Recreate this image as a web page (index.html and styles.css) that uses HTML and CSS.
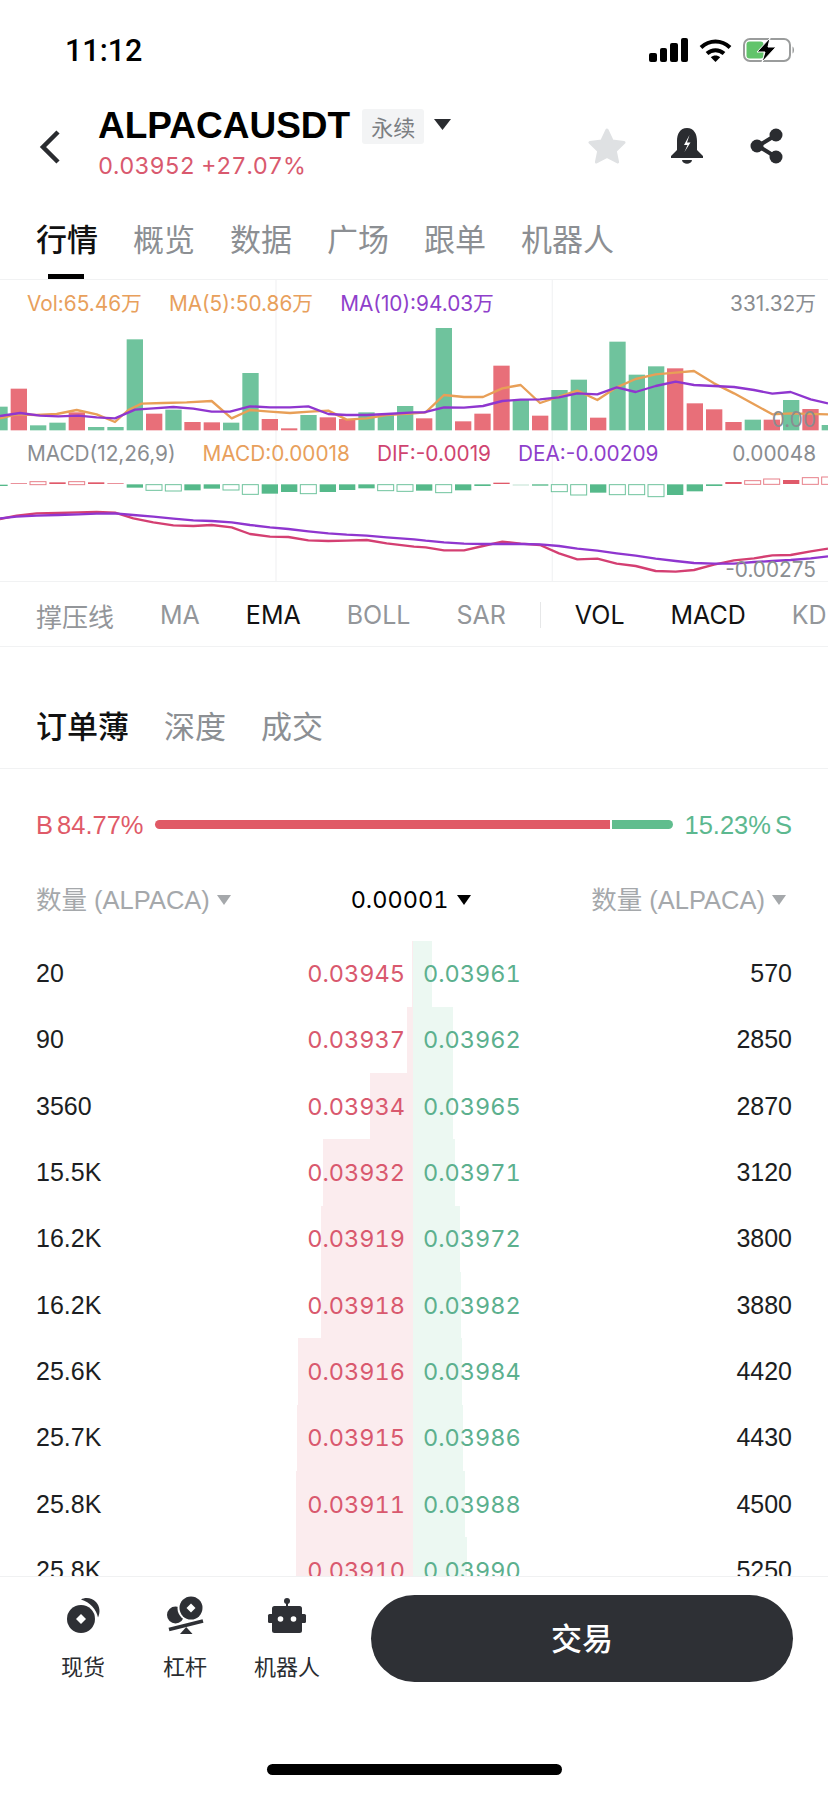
FILE: index.html
```html
<!DOCTYPE html>
<html lang="zh">
<head>
<meta charset="utf-8">
<title>ALPACAUSDT</title>
<link rel="stylesheet" href="styles.css">
</head>
<body>
<div class="app">
  <div class="status">
    <span class="time">11:12</span>
    <div class="status-icons">
      <div class="signal"><i class="s1"></i><i class="s2"></i><i class="s3"></i><i class="s4"></i></div>
      <svg class="wifi" viewBox="0 0 33 24"><path class="wifi-arc" d="M2 9.500C10.500 1.500 22.500 1.500 31 9.500"/><path class="wifi-arc" d="M8 15.500C13 11 20 11 25 15.500"/><path class="wifi-fill" d="M16.500 24L11.800 19.300C14.500 17 18.500 17 21.200 19.300Z"/></svg>
      <svg class="battery" viewBox="0 0 52 24"><rect class="batt-frame" x="1" y="1" width="46" height="22" rx="6"/><rect class="batt-level" x="3.500" y="3.500" width="17" height="17" rx="3"/><path class="batt-cap" d="M49.500 8.500C51.500 9.500 51.500 14.500 49.500 15.500Z"/><path class="batt-bolt" d="M27 0L14 14H22L19 24L33 9H25Z"/></svg>
    </div>
  </div>

  <div class="nav">
    <svg class="back" viewBox="0 0 24 36"><path d="M20 3L5 18L20 33"/></svg>
    <div class="symbol">
      <div class="symbol-top">
        <span class="pair">ALPACAUSDT</span>
        <span class="badge">永续</span>
        <svg class="caret-dark" viewBox="0 0 17 11"><path d="M0 0H17L8.500 11Z"/></svg>
      </div>
      <div class="quote">0.03952 +27.07%</div>
    </div>
    <div class="nav-actions">
      <svg class="star" viewBox="0 0 38 36"><path d="M19 2L24.200 13L36 14.500L27.300 23L29.600 34L19 28.500L8.400 34L10.700 23L2 14.500L13.800 13Z"/></svg>
      <svg class="bell" viewBox="0 0 34 36"><path class="bell-body" d="M17 0C24 0 27 6 27 13V22L33 28V30H1V28L7 22V13C7 6 10 0 17 0Z"/><path class="bell-body" d="M12 32H22C21.500 37 12.500 37 12 32Z"/><path class="bell-bolt" d="M19.500 7L14 17H17.500L14.500 24L20.500 14.500H17Z"/></svg>
      <svg class="share" viewBox="0 0 34 36"><path class="share-line" d="M26 7L8 18L26 29"/><circle class="share-dot" cx="26" cy="7" r="6.500"/><circle class="share-dot" cx="7" cy="18" r="6.500"/><circle class="share-dot" cx="26" cy="29" r="6.500"/></svg>
    </div>
  </div>

  <div class="tabs">
    <span class="tab active">行情</span>
    <span class="tab">概览</span>
    <span class="tab">数据</span>
    <span class="tab">广场</span>
    <span class="tab">跟单</span>
    <span class="tab">机器人</span>
  </div>

  <div class="chart">
    <svg class="plot" viewBox="0 15 2484 906" preserveAspectRatio="none">
      <path class="grid" d="M828 15V921M1657 15V921"/>
      <g class="bars">
        <rect class="g" x="-26" y="395" width="49" height="71"/><rect class="r" x="32" y="341" width="49" height="125"/><rect class="g" x="90" y="451" width="49" height="15"/><rect class="g" x="148" y="443" width="49" height="23"/><rect class="r" x="206" y="412" width="49" height="54"/><rect class="g" x="264" y="456" width="49" height="10"/><rect class="g" x="322" y="456" width="49" height="10"/><rect class="g" x="380" y="193" width="49" height="273"/><rect class="r" x="438" y="416" width="49" height="50"/><rect class="g" x="496" y="404" width="49" height="62"/><rect class="r" x="553" y="441" width="49" height="25"/><rect class="r" x="611" y="442" width="49" height="24"/><rect class="g" x="669" y="443" width="49" height="23"/><rect class="g" x="727" y="294" width="49" height="172"/><rect class="r" x="785" y="432" width="49" height="34"/><rect class="r" x="843" y="460" width="49" height="6"/><rect class="g" x="901" y="420" width="49" height="46"/><rect class="r" x="959" y="427" width="49" height="39"/><rect class="r" x="1017" y="432" width="49" height="34"/><rect class="g" x="1075" y="412" width="49" height="54"/><rect class="g" x="1133" y="420" width="49" height="46"/><rect class="g" x="1191" y="393" width="49" height="73"/>
        <g transform="translate(1242 0)">
          <rect class="r" x="6" y="430" width="49" height="36"/><rect class="g" x="65" y="159" width="49" height="307"/><rect class="r" x="123" y="439" width="49" height="27"/><rect class="r" x="181" y="416" width="49" height="50"/><rect class="r" x="238" y="272" width="49" height="194"/><rect class="g" x="296" y="375" width="49" height="91"/><rect class="r" x="354" y="422" width="49" height="44"/><rect class="g" x="412" y="345" width="49" height="121"/><rect class="g" x="470" y="314" width="49" height="152"/><rect class="r" x="528" y="428" width="49" height="38"/><rect class="g" x="586" y="200" width="49" height="266"/><rect class="g" x="644" y="299" width="49" height="167"/><rect class="g" x="702" y="274" width="49" height="192"/><rect class="r" x="759" y="280" width="49" height="186"/><rect class="r" x="818" y="385" width="49" height="81"/><rect class="r" x="876" y="403" width="49" height="63"/><rect class="r" x="934" y="441" width="49" height="25"/><rect class="g" x="992" y="434" width="49" height="32"/><rect class="r" x="1049" y="434" width="49" height="32"/><rect class="g" x="1107" y="375" width="49" height="91"/><rect class="r" x="1165" y="402" width="49" height="64"/><rect class="g" x="1223" y="450" width="49" height="16"/>
        </g>
      </g>
      <polyline class="l-ma5" points="0,430 50,418 110,420 170,417 230,405 290,418 345,441 385,405 425,386 490,384 560,382 635,378 695,430 750,405 810,410 870,414 930,410 985,407 1040,434 1100,430 1160,420 1242,415 1277,412 1332,360 1392,366 1449,366 1507,340 1562,330 1620,384 1677,365 1732,347 1792,375 1850,337 1907,312 1967,298 2027,293 2082,288 2142,325 2202,355 2262,388 2317,418 2372,415 2484,418"/>
      <polyline class="l-pur" points="0,423 60,414 120,422 175,424 235,422 290,427 345,430 405,404 460,400 520,396 580,401 635,410 690,410 750,394 810,397 870,397 925,394 985,417 1040,420 1100,420 1160,417 1242,412 1272,412 1332,397 1392,398 1449,393 1507,378 1562,374 1620,373 1677,367 1732,355 1792,358 1850,337 1907,351 1967,333 2027,320 2082,330 2142,333 2202,336 2262,345 2317,356 2372,351 2432,373 2484,385"/>
      <g class="macd">
        <rect class="g" x="-26" y="629" width="49" height="4"/><rect class="r" x="32" y="624" width="49" height="2"/><rect class="ho-r" x="90" y="620" width="48" height="9"/><rect class="r" x="148" y="622" width="49" height="5"/><rect class="ho-r" x="206" y="620" width="48" height="9"/><rect class="r" x="264" y="622" width="49" height="5"/><rect class="r" x="322" y="624" width="49" height="2"/><rect class="g" x="380" y="628" width="49" height="10"/><rect class="ho-g" x="438" y="629" width="48" height="17"/><rect class="ho-g" x="496" y="629" width="48" height="19"/><rect class="g" x="553" y="628" width="49" height="18"/><rect class="g" x="611" y="628" width="49" height="13"/><rect class="ho-g" x="669" y="629" width="48" height="16"/><rect class="ho-g" x="727" y="629" width="48" height="29"/><rect class="g" x="785" y="628" width="49" height="28"/><rect class="g" x="843" y="628" width="49" height="23"/><rect class="ho-g" x="901" y="629" width="48" height="27"/><rect class="g" x="959" y="628" width="49" height="23"/><rect class="g" x="1017" y="628" width="49" height="17"/><rect class="g" x="1075" y="628" width="49" height="12"/><rect class="ho-g" x="1133" y="629" width="48" height="18"/><rect class="ho-g" x="1191" y="629" width="48" height="20"/>
        <g transform="translate(1242 0)">
          <rect class="g" x="6" y="628" width="49" height="19"/><rect class="ho-g" x="65" y="629" width="48" height="24"/><rect class="g" x="123" y="628" width="49" height="18"/><rect class="g" x="181" y="628" width="49" height="5"/><rect class="r" x="238" y="623" width="49" height="4"/><rect class="g pale" x="296" y="628" width="49" height="4"/><rect class="g" x="354" y="628" width="49" height="4"/><rect class="ho-g" x="412" y="629" width="48" height="21"/><rect class="ho-g" x="470" y="629" width="48" height="31"/><rect class="g" x="528" y="628" width="49" height="25"/><rect class="ho-g" x="586" y="629" width="48" height="30"/><rect class="ho-g" x="644" y="629" width="48" height="30"/><rect class="ho-g" x="702" y="629" width="48" height="36"/><rect class="g" x="759" y="628" width="49" height="32"/><rect class="g" x="818" y="628" width="49" height="21"/><rect class="g" x="876" y="628" width="49" height="5"/><rect class="r" x="934" y="621" width="49" height="6"/><rect class="ho-r" x="992" y="617" width="48" height="11"/><rect class="ho-r" x="1049" y="612" width="48" height="16"/><rect class="r" x="1107" y="615" width="49" height="12"/><rect class="ho-r" x="1165" y="608" width="48" height="20"/><rect class="ho-r" x="1223" y="606" width="48" height="22"/>
        </g>
      </g>
      <polyline class="l-dif" points="0,732 50,722 110,715 175,714 235,712 290,711 345,713 400,730 460,742 520,751 580,753 635,750 695,757 750,777 810,785 865,786 925,796 985,798 1040,797 1100,795 1160,805 1242,815 1277,817 1332,826 1392,826 1449,813 1507,800 1562,806 1620,810 1677,835 1732,853 1792,851 1850,866 1907,873 1967,888 2027,890 2082,885 2142,869 2202,856 2262,850 2317,841 2372,840 2432,829 2484,821"/>
      <polyline class="l-pur" points="0,730 50,725 110,722 175,720 235,718 290,716 345,715 400,720 460,725 520,731 580,736 635,738 695,742 750,750 810,757 865,762 925,769 985,775 1040,779 1100,782 1160,787 1242,793 1277,797 1332,802 1392,806 1449,807 1507,807 1562,807 1620,808 1677,813 1732,821 1792,827 1850,835 1907,842 1967,851 2027,858 2082,864 2142,866 2202,866 2262,861 2317,858 2372,855 2432,850 2484,844"/>
    </svg>
    <div class="legend legend-vol">
      <span class="c-ma5">Vol:65.46万</span>
      <span class="c-ma5">MA(5):50.86万</span>
      <span class="c-pur">MA(10):94.03万</span>
      <span class="c-gray push">331.32万</span>
    </div>
    <div class="legend legend-macd">
      <span class="c-gray">MACD(12,26,9)</span>
      <span class="c-ma5">MACD:0.00018</span>
      <span class="c-dif">DIF:-0.0019</span>
      <span class="c-pur">DEA:-0.00209</span>
      <span class="c-gray push">0.00048</span>
    </div>
    <span class="axis axis-zero">0.00</span>
    <span class="axis axis-low">-0.00275</span>
  </div>

  <div class="indicators">
    <span class="ind ind-cn">撑压线</span>
    <span class="ind">MA</span>
    <span class="ind on">EMA</span>
    <span class="ind">BOLL</span>
    <span class="ind">SAR</span>
    <span class="ind-sep"></span>
    <span class="ind on">VOL</span>
    <span class="ind on">MACD</span>
    <span class="ind">KD</span>
  </div>

  <div class="subtabs">
    <span class="tab active">订单薄</span>
    <span class="tab">深度</span>
    <span class="tab">成交</span>
  </div>

  <div class="ratio">
    <span class="ratio-buy"><span>B</span><span>84.77%</span></span>
    <div class="ratio-bar"><i class="ratio-b"></i><i class="ratio-s"></i></div>
    <span class="ratio-sell"><span>15.23%</span><span>S</span></span>
  </div>

  <div class="book-head">
    <span class="bh-cell">数量 (ALPACA)<svg class="caret-gray" viewBox="0 0 14 10"><path d="M0 0H14L7 10Z"/></svg></span>
    <span class="bh-mid">0.00001<svg class="caret-black" viewBox="0 0 14 10"><path d="M0 0H14L7 10Z"/></svg></span>
    <span class="bh-cell">数量 (ALPACA)<svg class="caret-gray" viewBox="0 0 14 10"><path d="M0 0H14L7 10Z"/></svg></span>
  </div>

  <div class="book">
    <div class="row"><i class="depth-b" style="width:1px"></i><i class="depth-s" style="width:19px"></i><span class="qty">20</span><span class="bid">0.03945</span><span class="ask">0.03961</span><span class="qty right">570</span></div>
    <div class="row"><i class="depth-b" style="width:6px"></i><i class="depth-s" style="width:40px"></i><span class="qty">90</span><span class="bid">0.03937</span><span class="ask">0.03962</span><span class="qty right">2850</span></div>
    <div class="row"><i class="depth-b" style="width:43px"></i><i class="depth-s" style="width:40px"></i><span class="qty">3560</span><span class="bid">0.03934</span><span class="ask">0.03965</span><span class="qty right">2870</span></div>
    <div class="row"><i class="depth-b" style="width:90px"></i><i class="depth-s" style="width:42px"></i><span class="qty">15.5K</span><span class="bid">0.03932</span><span class="ask">0.03971</span><span class="qty right">3120</span></div>
    <div class="row"><i class="depth-b" style="width:92px"></i><i class="depth-s" style="width:47px"></i><span class="qty">16.2K</span><span class="bid">0.03919</span><span class="ask">0.03972</span><span class="qty right">3800</span></div>
    <div class="row"><i class="depth-b" style="width:92px"></i><i class="depth-s" style="width:48px"></i><span class="qty">16.2K</span><span class="bid">0.03918</span><span class="ask">0.03982</span><span class="qty right">3880</span></div>
    <div class="row"><i class="depth-b" style="width:115px"></i><i class="depth-s" style="width:49px"></i><span class="qty">25.6K</span><span class="bid">0.03916</span><span class="ask">0.03984</span><span class="qty right">4420</span></div>
    <div class="row"><i class="depth-b" style="width:116px"></i><i class="depth-s" style="width:50px"></i><span class="qty">25.7K</span><span class="bid">0.03915</span><span class="ask">0.03986</span><span class="qty right">4430</span></div>
    <div class="row"><i class="depth-b" style="width:117px"></i><i class="depth-s" style="width:52px"></i><span class="qty">25.8K</span><span class="bid">0.03911</span><span class="ask">0.03988</span><span class="qty right">4500</span></div>
    <div class="row"><i class="depth-b" style="width:117px"></i><i class="depth-s" style="width:54px"></i><span class="qty">25.8K</span><span class="bid">0.03910</span><span class="ask">0.03990</span><span class="qty right">5250</span></div>
  </div>

  <div class="footer">
    <div class="footer-main">
      <div class="fitem">
        <svg class="ficon" viewBox="0 0 40 40"><path class="fi" d="M18 3.500C22 1 29 1.500 33 6C37 10.500 37.500 16.500 35 21.500C33.500 13.500 27 6 18 3.500Z"/><circle class="fi" cx="18" cy="23" r="14"/><path class="fw" d="M18 18L23 23L18 28L13 23Z"/></svg>
        <span class="flabel">现货</span>
      </div>
      <div class="fitem">
        <svg class="ficon" viewBox="0 0 40 40"><circle class="fi" cx="10.500" cy="19" r="8.500"/><circle class="fw" cx="26" cy="12" r="13.500"/><circle class="fi" cx="26" cy="12" r="11.500"/><path class="fw" d="M26 7.500L30.500 12L26 16.500L21.500 12Z"/><path class="fbeam" d="M4 33.500L38 25"/><path class="fi" d="M15 38H27.500L21.200 31Z"/></svg>
        <span class="flabel">杠杆</span>
      </div>
      <div class="fitem">
        <svg class="ficon" viewBox="0 0 40 40"><circle class="fi" cx="20" cy="5" r="3"/><rect class="fi" x="19" y="5" width="2" height="6"/><rect class="fi" x="5" y="10" width="30" height="27" rx="2.500"/><rect class="fi" x="1" y="18" width="38" height="9" rx="1.500"/><circle class="fw" cx="13.500" cy="23" r="2.800"/><circle class="fw" cx="26.500" cy="23" r="2.800"/></svg>
        <span class="flabel">机器人</span>
      </div>
      <button class="trade">交易</button>
    </div>
    <div class="home"></div>
  </div>
</div>
</body>
</html>
```

FILE: styles.css
```css
* { box-sizing: border-box; }
html, body { margin: 0; padding: 0; background: #fff; }
body {
  font-family: "Liberation Sans", "Noto Sans CJK SC", sans-serif;
  color: #14161a;
}
.app { width: 828px; height: 1793px; display: flex; flex-direction: column; overflow: hidden; }

/* status bar */
.status { height: 100px; display: flex; align-items: flex-start; justify-content: space-between; padding: 35px 33px 0 65px; flex: none; }
.time { font-family: Roboto, sans-serif; font-weight: 500; font-size: 30.500px; line-height: 32px; color: #000; }
.status-icons { display: flex; align-items: center; gap: 11px; padding-top: 3px; }
.signal { display: flex; align-items: flex-end; gap: 3px; height: 24px; }
.signal i { display: block; width: 7.500px; background: #000; border-radius: 2px; }
.s1 { height: 9px; } .s2 { height: 14px; } .s3 { height: 19px; } .s4 { height: 24px; }
.wifi { width: 33px; height: 24px; }
.wifi-arc { fill: none; stroke: #000; stroke-width: 4; }
.wifi-fill { fill: #000; }
.battery { width: 52px; height: 24px; }
.batt-frame { fill: #fff; stroke: #9a9c9c; stroke-width: 2; }
.batt-level { fill: #62c46b; }
.batt-cap { fill: #9a9c9c; }
.batt-bolt { fill: #000; stroke: #fff; stroke-width: 1; }

/* nav */
.nav { height: 90px; display: flex; padding-left: 38px; flex: none; }
.back { width: 24px; height: 36px; margin-top: 29px; flex: none; }
.back path { fill: none; stroke: #2a2c30; stroke-width: 4.500; }
.symbol { margin-left: 36px; display: flex; flex-direction: column; }
.symbol-top { display: flex; align-items: center; height: 44px; margin-top: 4px; }
.pair { font-weight: 700; font-size: 37px; line-height: 44px; color: #000; }
.badge { margin-left: 12px; width: 62px; height: 35px; background: #f3f4f5; border-radius: 3px; color: #7c7f83; font-size: 22px; line-height: 35px; text-align: center; font-family: "Noto Sans CJK SC", sans-serif; }
.caret-dark { width: 17px; height: 11px; margin-left: 10px; margin-top: -3px; }
.caret-dark path { fill: #2a2c30; }
.quote { font-family: Inter, sans-serif; font-size: 23.300px; font-variant-numeric: tabular-nums; line-height: 28px; color: #d9596e; margin-top: 4px; white-space: nowrap; }
.nav-actions { margin-left: auto; display: flex; align-items: flex-start; padding-top: 28px; padding-right: 44px; }
.star { width: 38px; height: 36px; margin-right: 44px; }
.star path { fill: #dfe1e3; stroke: #dfe1e3; stroke-width: 3; stroke-linejoin: round; }
.bell { width: 34px; height: 36px; margin-right: 46px; }
.bell-body { fill: #2a2c30; }
.bell-bolt { fill: #fff; }
.share { width: 34px; height: 36px; }
.share-line { fill: none; stroke: #2a2c30; stroke-width: 4; }
.share-dot { fill: #2a2c30; }

/* tabs */
.tabs { height: 90px; display: flex; gap: 35px; padding: 27px 0 0 36px; border-bottom: 1px solid #f1f2f3; position: relative; flex: none; }
.tab { font-family: "Noto Sans CJK SC", sans-serif; font-size: 31px; line-height: 42px; color: #8c8f93; }
.tab.active { color: #111; font-weight: 500; }
.tabs .active::after { content: ""; position: absolute; left: 48px; bottom: 0; width: 36px; height: 5px; background: #000; }

/* chart */
.chart { height: 302px; position: relative; border-bottom: 1px solid #f1f2f3; flex: none; overflow: hidden; font-family: Inter, "Noto Sans CJK SC", sans-serif; font-size: 20.800px; }
.plot { position: absolute; left: 0; top: 0; width: 828px; height: 302px; }
.grid { stroke: #f3f4f5; stroke-width: 4; fill: none; }
.g { fill: #6fc39d; }
.r { fill: #e86f79; }
.macd .g { fill: #55b98a; }
.macd .r { fill: #e05a6a; }
.macd .pale { fill: #cfe9dd; }
.ho-g { fill: #fff; stroke: #6fc39d; stroke-width: 3; }
.ho-r { fill: #fff; stroke: #e8808a; stroke-width: 3; }
.l-ma5, .l-pur, .l-dif { fill: none; stroke-width: 7; stroke-linejoin: round; }
.l-ma5 { stroke: #e89f57; }
.l-pur { stroke: #8f36cf; }
.l-dif { stroke: #d43f72; }
.legend { position: relative; display: flex; gap: 27px; padding: 0 12px 0 27px; height: 28px; line-height: 28px; white-space: nowrap; }
.legend-vol { margin-top: 10px; }
.legend-macd { margin-top: 122px; }
.push { margin-left: auto; }
.c-ma5 { color: #e8a05c; }
.c-pur { color: #8f3fcb; }
.c-dif { color: #cf4470; }
.c-gray { color: #8a8d91; }
.axis { position: absolute; right: 12px; color: #8a8d91; line-height: 28px; }
.axis-zero { top: 126px; }
.axis-low { top: 276px; }

/* indicators */
.indicators { height: 65px; display: flex; align-items: center; gap: 46px; padding: 2px 0 0 36px; border-bottom: 1px solid #f1f2f3; flex: none; font-family: Inter, "Noto Sans CJK SC", sans-serif; font-size: 25px; color: #93969a; white-space: nowrap; }
.ind-cn { font-family: "Noto Sans CJK SC", sans-serif; font-size: 26px; }
.ind.on { color: #111; }
.ind-sep { width: 1px; height: 26px; background: #e6e7e8; margin: 0 -12px; }

/* order tabs */
.subtabs { height: 122px; display: flex; gap: 35px; padding: 57px 0 0 36px; border-bottom: 1px solid #f1f2f3; flex: none; }

/* ratio */
.ratio { height: 112px; display: flex; align-items: center; padding: 0 36px; font-size: 25.500px; flex: none; }
.ratio-buy { display: flex; gap: 4px; color: #df5a68; width: 119px; }
.ratio-sell { display: flex; gap: 4px; color: #5cb88f; width: 119px; justify-content: flex-end; }
.ratio-bar { width: 518px; height: 9px; display: flex; gap: 2px; margin-top: -2px; }
.ratio-b { display: block; width: 455px; background: #e05a66; border-radius: 4.500px 0 0 4.500px; }
.ratio-s { display: block; flex: 1; background: #60bd8e; border-radius: 0 4.500px 4.500px 0; }

/* book head */
.book-head { height: 59.500px; display: flex; justify-content: space-between; padding: 0 42px 0 36px; align-items: flex-start; font-size: 25.500px; color: #a5a8ab; flex: none; line-height: 38px; }
.bh-cell { display: flex; align-items: center; height: 38px; }
.bh-mid { display: flex; align-items: center; height: 38px; color: #000; font-family: Inter, sans-serif; font-size: 23.500px; font-variant-numeric: tabular-nums; }
.caret-gray, .caret-black { width: 14px; height: 10px; margin-left: 7px; }
.caret-black { margin-left: 9px; }
.caret-gray path { fill: #a5a8ab; }
.caret-black path { fill: #000; }

/* book */
.book { flex: 1; min-height: 0; overflow: hidden; }
.row { position: relative; height: 66.300px; display: flex; align-items: center; padding: 0 36px; font-size: 25px; }
.depth-b, .depth-s { position: absolute; top: 0; bottom: 0; display: block; }
.depth-b { right: 415px; background: #fbecee; }
.depth-s { left: 413px; background: #ecf8f2; }
.qty { position: relative; width: 160px; color: #1c1e22; }
.qty.right { text-align: right; width: 150px; margin-left: auto; }
.bid, .ask { position: relative; font-family: Inter, sans-serif; font-size: 23.500px; font-variant-numeric: tabular-nums; width: 100px; }
.bid { color: #d9596e; margin-left: 109px; text-align: right; }
.ask { color: #5cb08e; margin-left: 18px; }

/* footer */
.footer { height: 217px; flex: none; background: #fff; border-top: 1px solid #f0f1f2; display: flex; flex-direction: column; align-items: center; }
.footer-main { width: 828px; display: flex; padding: 18px 35px 0 32px; }
.fitem { width: 102px; display: flex; flex-direction: column; align-items: center; }
.ficon { width: 40px; height: 40px; margin-top: 1px; }
.fi { fill: #2e3035; }
.fw { fill: #fff; }
.fbeam { stroke: #2e3035; stroke-width: 3.500; fill: none; }
.flabel { font-family: "Noto Sans CJK SC", sans-serif; font-size: 22px; line-height: 30px; margin-top: 14px; color: #2a2c30; white-space: nowrap; }
.trade { margin-left: auto; width: 422px; height: 87px; padding: 0 0 4px; border: 0; border-radius: 44px; background: #2e3035; color: #fff; font-family: "Noto Sans CJK SC", sans-serif; font-size: 31px; font-weight: 500; }
.home { width: 295px; height: 11px; background: #000; border-radius: 6px; margin-top: 82px; }
```
